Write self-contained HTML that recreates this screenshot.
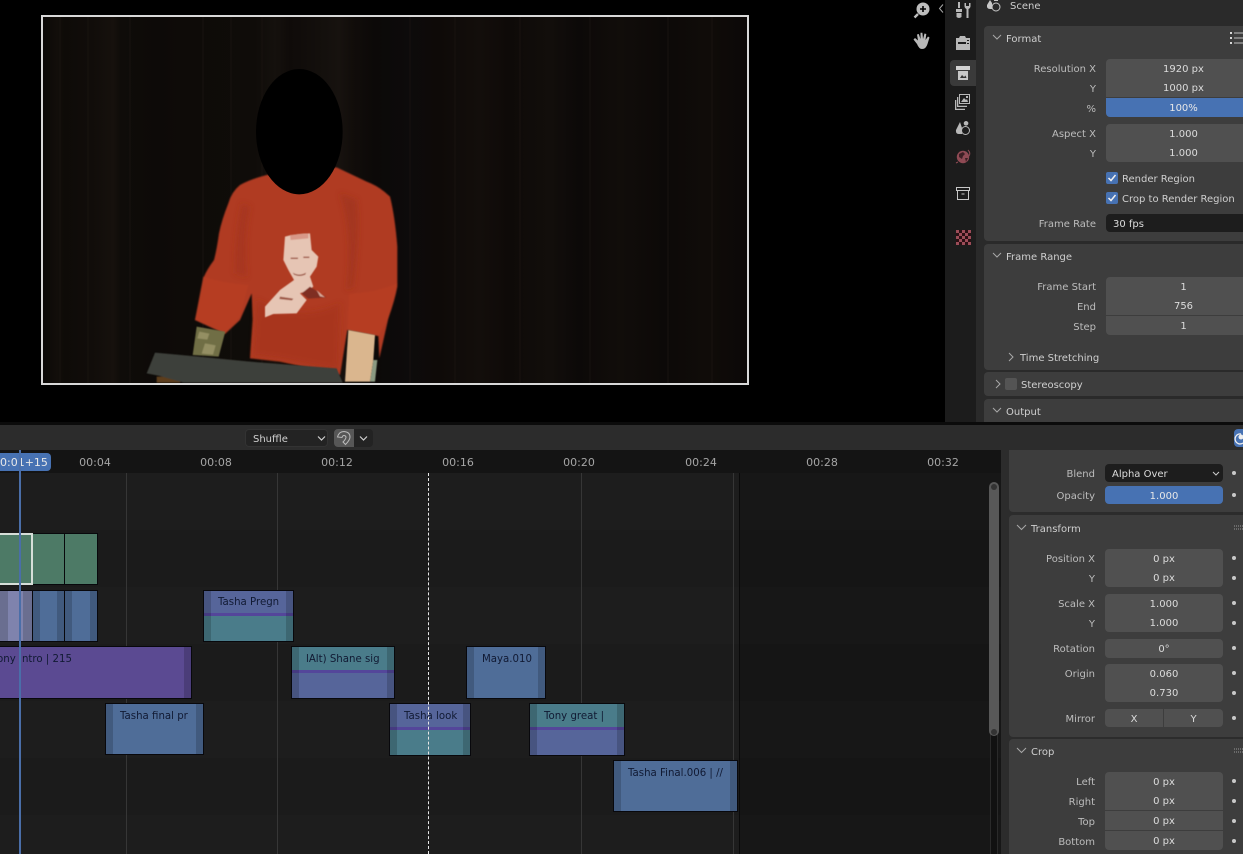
<!DOCTYPE html>
<html><head><meta charset="utf-8">
<style>
html,body{margin:0;padding:0;background:#000}
#r{position:relative;width:1243px;height:854px;overflow:hidden;background:#000;font-family:"DejaVu Sans","Liberation Sans",sans-serif;font-size:10px;color:#c6c6c6}
#r div{position:absolute;box-sizing:border-box;white-space:nowrap}
.p{background:#3d3d3d;border-radius:4px}
.l{left:976px;width:120px;text-align:right;height:18px;line-height:22px;color:#bdbdbd}
.m{left:1001px;width:94px;text-align:right;height:18px;line-height:22px;color:#bdbdbd}
.f{left:1106px;width:155px;height:19px;line-height:22px;text-align:center;background:#505050;color:#dcdcdc}
.g{left:1105px;width:118px;height:19px;line-height:22px;text-align:center;background:#505050;color:#dcdcdc}
.b{background:#4772b3!important;color:#e8e8e8}
.h{color:#cfcfcf;height:18px;line-height:22px}
.d{left:1232px;width:4px;height:4px;border-radius:50%;background:#c8c8c8}
.t{top:450px;height:23px;line-height:25px;color:#a5a5a5;font-size:11px;width:50px;text-align:center}
.s{border:1px solid #08080c}
.n{color:#111a33;height:16px;line-height:20px;font-size:10.2px}
.e{width:7px;top:0;bottom:0;background:rgba(0,0,0,.17)}
.e.a{left:0}.e.z{right:0}
.line{width:1px;top:473px;bottom:0;background:#363636}
svg{position:absolute;overflow:visible}
</style></head><body><div id="r">

<!-- video -->
<svg style="left:0;top:0" width="945" height="422" viewBox="0 0 945 422">
<defs>
<linearGradient id="c" x1="0" x2="1" y1="0" y2="0">
<stop offset="0" stop-color="#0b0907"/><stop offset=".02" stop-color="#120e0a"/><stop offset=".03" stop-color="#0e0b08"/><stop offset=".07" stop-color="#110d0a"/><stop offset=".1" stop-color="#16110d"/><stop offset=".11" stop-color="#0f0c09"/><stop offset=".16" stop-color="#0d0a08"/><stop offset=".2" stop-color="#0e0b08"/><stop offset=".3" stop-color="#0f0c09"/><stop offset=".33" stop-color="#15110d"/><stop offset=".35" stop-color="#0f0b09"/><stop offset=".4" stop-color="#14100d"/><stop offset=".42" stop-color="#17120f"/><stop offset=".44" stop-color="#110d0a"/><stop offset=".47" stop-color="#0c0908"/><stop offset=".52" stop-color="#0d0b0b"/><stop offset=".56" stop-color="#0e0a08"/><stop offset=".62" stop-color="#130e0b"/><stop offset=".66" stop-color="#0e0a08"/><stop offset=".72" stop-color="#120e0b"/><stop offset=".76" stop-color="#0c0908"/><stop offset=".82" stop-color="#110d0a"/><stop offset=".88" stop-color="#0c0908"/><stop offset=".94" stop-color="#100c09"/><stop offset="1" stop-color="#0b0807"/>
</linearGradient>
<filter id="bl" x="-5%" y="-5%" width="110%" height="110%"><feGaussianBlur stdDeviation="2.4"/></filter>
<filter id="bf" x="-10%" y="-10%" width="120%" height="120%"><feGaussianBlur stdDeviation="8"/></filter>
<filter id="bs" x="-5%" y="-5%" width="110%" height="110%"><feGaussianBlur stdDeviation="1.2"/></filter>
<pattern id="ck" width="6" height="6" patternUnits="userSpaceOnUse"><rect x="3" width="3" height="3" fill="#2a1014"/><rect y="3" width="3" height="3" fill="#2a1014"/></pattern>
</defs>
<rect x="43" y="17" width="705" height="367" fill="url(#c)"/>
<path d="M60 17v367M88 17v367M130 17v367M203 17v367M231 17v367M262 17v367M410 17v367M455 17v367M520 17v367M590 17v367M668 17v367M712 17v367" stroke="#1c1612" stroke-width="1" opacity=".7"/>
<g transform="translate(140 60) scale(.33333)">
<g filter="url(#bl)">
<path d="M380 345 Q330 358 300 375 Q275 395 265 430 Q245 480 237 520 Q230 570 222 600 Q200 630 192 650 Q182 690 178 720 L165 780 L255 822 L300 780 L335 700 L338 780 L330 895 L420 905 L600 945 L622 810 L715 828 L718 895 L745 775 Q765 720 772 680 L772 560 Q765 470 750 410 Q720 380 680 365 L590 322Z" fill="#b03a22"/>
<path d="M190 650 Q250 670 325 675 L300 770 L255 820 L165 780Z" fill="#b63d23"/>
<path d="M628 700 Q700 700 772 670 L745 775 L715 828 L622 810Z" fill="#b63d23"/>
</g>
<g filter="url(#bf)">
<path d="M305 430 Q285 520 285 640 L320 650 Q310 530 330 440Z" fill="#a2331d" opacity=".6"/>
<path d="M600 400 Q640 520 620 690 L640 680 Q660 520 650 420Z" fill="#9c301b" opacity=".6"/>
<path d="M350 720 Q480 790 600 730 L595 930 L420 895 L340 885Z" fill="#a5341e" opacity=".7"/>
</g>
<g filter="url(#bs)">
<path d="M170 800 L256 815 L236 890 L158 885Z" fill="#6f6e45"/>
<path d="M178 815l30 6-6 18-30-4zM195 850l32 6-8 28-34-3z" fill="#948f64"/>
<path d="M625 810 L705 825 L700 900 L690 965 L615 965Z" fill="#dab68e"/>
<path d="M700 900 L712 900 L705 965 L690 965Z" fill="#8b9a82"/>
<path d="M435 530 Q470 520 510 520 L515 570 L535 590 L530 620 L510 650 L520 680 L505 690 L480 700 L500 720 L470 760 L400 762 L375 772 L375 740 L420 690 L462 660 L445 630 L430 600Z" fill="#e6c5b4"/>
<path d="M510 680 L558 712 L505 716 L485 700Z" fill="#7f2f24"/>
<path d="M530 690l25 22-15-3z" fill="#d8a898"/>
<path d="M452 593h22v4h-22zM490 590h18v4h-18zM458 638q20 12 40 0l-2 6q-18 8-34 0zM420 710l40 6-4 5-38-4z" fill="#9c5442"/>
<path d="M450 525 L505 521 L505 535 L452 540Z" fill="#d89888"/>
<path d="M50 950 L130 950 L120 968 L50 968Z" fill="#5c3c1e"/>
<path d="M45 878 Q180 890 330 905 L590 925 L608 968 L130 968 L60 948 L20 940Z" fill="#3d3f3a"/>
</g>
<ellipse cx="478" cy="215" rx="130" ry="188" fill="#000"/>
</g>
<rect x="42" y="16" width="706" height="368" fill="none" stroke="#d8d8d8" stroke-width="2"/>
</svg>

<!-- viewport icons -->
<svg style="left:912px;top:0" width="32" height="50" viewBox="0 0 32 50">
<circle cx="11" cy="9" r="6.500" fill="#bdbdbd"/><path d="M11 6v6M8 9h6" stroke="#000" stroke-width="1.600"/><path d="M6 14l-3.500 3.500" stroke="#bdbdbd" stroke-width="2.400"/>
<path d="M5 44 L1.500 39.500 L3 38 L6 40.500 L5 34.500 L6.800 34 L8.500 39 L8.500 32.800 L10.400 32.800 L11 39 L12.500 33.500 L14.300 34 L13.500 40 L16 36.500 L17.500 37.500 L15.500 44 Q14 49 10 49 Q7 49 5 44Z" fill="#b8b8b8"/>
<path d="M31 4.500l-3.500 4 3.500 4" fill="none" stroke="#a8a8a8" stroke-width="1"/>
</svg>

<!-- properties editor top -->
<div style="left:945px;top:0;width:31px;height:422px;background:#1c1c1c"></div>
<div style="left:976px;top:0;width:267px;height:422px;background:#2a2a2a"></div>
<div style="left:950px;top:60px;width:26px;height:26px;background:#3a3a3a;border-radius:4px 0 0 4px"></div>

<svg style="left:950px;top:0" width="26" height="250" viewBox="0 0 26 250">
<g fill="#b8b8b8">
<path d="M8 2h2v6H8zM6 9h6v3H6zM6.500 13h5v4q-2.500 2-5 0z"/>
<path d="M14.500 3v3q0 2 2 3v9h2V9q2-1 2-3V3l-1.500 0v3h-3V3z"/>
<path d="M6 38h3l1-2h5l1 2h4v12H6z M8 42v2h8v-2z M17 40h2v1h-2z M17 43h2v1h-2z" fill-rule="evenodd"/>
<path d="M6 66h14v4H6z" fill="#d4d4d4"/><path d="M8 71h10v9H8z" fill="#c8c8c8"/><path d="M10 78l2-3 2 2 1.500-1.500 1 2.500z" fill="#333"/>
<path d="M9 94h11v10H9z M10 95v8h9v-8z" fill-rule="evenodd"/><path d="M11 102l3-4 2 2 1-1 1 3z M16 96h2v2h-2z"/>
<path d="M7 97v10h10v-1.300H8.300V97z M5 100v10h10v-1.300H6.300V100z"/>
<path d="M10 122l-4 8q-.5 4 3 4h3v-6z M16 121a2.300 2.300 0 1 0 .1 0z"/>
</g>
<circle cx="15.500" cy="130.500" r="4" fill="#1c1c1c" stroke="#b8b8b8" stroke-width="1"/>
<circle cx="13" cy="157" r="6.200" fill="#8f4a54"/><path d="M9 154l4-2 2 2-2 2-1 3-3-2z M15 158l3 0-2 4z" fill="#3c1f24"/><path d="M6 163l2-1 M18 150q3 3 1 6" stroke="#8f4a54" fill="none"/>
<path d="M6.500 187.500h13v3h-13z M7.500 190.500h11v9h-11z M11.500 194h3" fill="none" stroke="#c8c8c8" stroke-width="1"/>
<rect x="6" y="230" width="15" height="15" fill="#9c4c58"/>
<g transform="translate(6 230)"><rect width="15" height="15" fill="url(#ck)"/></g>
</svg>

<svg style="left:986px;top:0" width="18" height="14" viewBox="0 0 18 14">
<path d="M4 0l-3 5q-.5 4 3 4h2V3z M8 0h4v1H8z" fill="#c8c8c8"/><circle cx="10" cy="7" r="4" fill="#2a2a2a" stroke="#c8c8c8"/>
</svg>
<div class="h" style="left:1010px;top:-4px">Scene</div>

<div class="p" style="left:984px;top:26px;width:270px;height:215px"></div>
<svg style="left:992px;top:33px" width="12" height="10"><path d="M1 2l4 4 4-4" fill="none" stroke="#a8a8a8"/></svg>
<div class="h" style="left:1006px;top:29px">Format</div>
<svg style="left:1228px;top:31px" width="15" height="14"><path d="M2 1h2v2H2zM2 6h2v2H2zM2 11h2v2H2z" fill="#d8d8d8"/><path d="M6 2h9M6 7h9M6 12h9" stroke="#c0c0c0"/></svg>

<div class="l" style="top:59px">Resolution X</div><div class="f" style="top:59px;border-radius:4px 0 0 0">1920 px</div>
<div class="l" style="top:79px">Y</div><div class="f" style="top:78px">1000 px</div>
<div class="l" style="top:99px">%</div><div class="f b" style="top:98px;border-radius:0 0 0 4px">100%</div>
<div class="l" style="top:124px">Aspect X</div><div class="f" style="top:124px;border-radius:4px 0 0 0">1.000</div>
<div class="l" style="top:144px">Y</div><div class="f" style="top:143px;border-radius:0 0 0 4px">1.000</div>

<svg style="left:1106px;top:172px" width="12" height="32"><rect width="12" height="12" rx="2" fill="#4772b3"/><rect y="20" width="12" height="12" rx="2" fill="#4772b3"/><path d="M2.500 6l2.500 2.500 4.500-5.500M2.500 26l2.500 2.500 4.500-5.500" fill="none" stroke="#f0f0f0" stroke-width="1.500"/></svg>
<div class="h" style="left:1122px;top:169px">Render Region</div>
<div class="h" style="left:1122px;top:189px">Crop to Render Region</div>

<div class="l" style="top:214px">Frame Rate</div>
<div class="f" style="top:214px;background:#1d1d1d;text-align:left;padding-left:7px;border-radius:4px 0 0 4px;height:18px">30 fps</div>

<div class="p" style="left:984px;top:244px;width:270px;height:126px"></div>
<svg style="left:992px;top:251px" width="12" height="10"><path d="M1 2l4 4 4-4" fill="none" stroke="#a8a8a8"/></svg>
<div class="h" style="left:1006px;top:247px">Frame Range</div>
<div class="l" style="top:277px">Frame Start</div><div class="f" style="top:277px;border-radius:4px 0 0 0">1</div>
<div class="l" style="top:297px">End</div><div class="f" style="top:296px">756</div>
<div class="l" style="top:317px">Step</div><div class="f" style="top:316px;border-radius:0 0 0 4px">1</div>
<svg style="left:1008px;top:352px" width="10" height="12"><path d="M1 1l4 4-4 4" fill="none" stroke="#a8a8a8"/></svg>
<div class="h" style="left:1020px;top:348px">Time Stretching</div>

<div class="p" style="left:984px;top:372px;width:270px;height:24px"></div>
<svg style="left:995px;top:379px" width="10" height="12"><path d="M1 1l4 4-4 4" fill="none" stroke="#a8a8a8"/></svg>
<div style="left:1005px;top:378px;width:12px;height:12px;background:#545454;border-radius:2px"></div>
<div class="h" style="left:1021px;top:375px">Stereoscopy</div>

<div class="p" style="left:984px;top:399px;width:270px;height:30px"></div>
<svg style="left:992px;top:406px" width="12" height="10"><path d="M1 2l4 4 4-4" fill="none" stroke="#a8a8a8"/></svg>
<div class="h" style="left:1006px;top:402px">Output</div>

<!-- divider + header -->
<div style="left:0;top:422px;width:1243px;height:3px;background:#0b0b0b"></div>
<div style="left:0;top:425px;width:1243px;height:25px;background:#2c2c2c"></div>
<div style="left:245px;top:429px;width:83px;height:18px;background:#232323;border-radius:4px;border:1px solid #333;line-height:20px;padding-left:7px;color:#d0d0d0">Shuffle</div>
<svg style="left:317px;top:435px" width="10" height="8"><path d="M1 1.500l3.500 3.500 3.500-3.500" fill="none" stroke="#d0d0d0" stroke-width="1.200"/></svg>
<div style="left:334px;top:429px;width:20px;height:18px;background:#575757;border-radius:4px 0 0 4px"></div>
<svg style="left:336px;top:430px" width="16" height="16" viewBox="0 0 16 16"><path d="M1.500 7 Q3 1.500 8 1.500 Q14 2 14 7 Q14 10 9.500 14.500 L7 12 Q10 9 10 7 Q9.500 5.500 8 5.500 Q6.500 5.500 6 7.500Z" fill="none" stroke="#bcbcbc" stroke-width="1"/></svg>
<div style="left:354px;top:429px;width:19px;height:18px;background:#232323;border-radius:0 4px 4px 0"></div>
<svg style="left:359px;top:435px" width="10" height="8"><path d="M1 1.500l3.500 3.500 3.500-3.500" fill="none" stroke="#d0d0d0" stroke-width="1.200"/></svg>
<div style="left:1234px;top:429px;width:12px;height:18px;background:#4772b3;border-radius:4px 0 0 4px"></div>
<svg style="left:1235px;top:431px" width="8" height="14"><path d="M6 3a5 5 0 1 0 2 9" fill="none" stroke="#eee" stroke-width="1.300"/><circle cx="6" cy="6" r="2.500" fill="#eee"/></svg>

<!-- timeline -->
<div style="left:0;top:450px;width:1001px;height:23px;background:#141414"></div>
<div style="left:0;top:473px;width:1001px;height:381px;background:#1d1d1d"></div>
<div style="left:0;top:530px;width:1001px;height:57px;background:#1b1b1b"></div>
<div style="left:0;top:587px;width:1001px;height:57px;background:#1d1d1d"></div>
<div style="left:0;top:644px;width:1001px;height:57px;background:#1b1b1b"></div>
<div style="left:0;top:701px;width:1001px;height:57px;background:#1d1d1d"></div>
<div style="left:0;top:758px;width:1001px;height:57px;background:#1b1b1b"></div>
<div style="left:739px;top:473px;width:262px;height:381px;background:rgba(0,0,0,.2)"></div>
<div style="left:739px;top:473px;width:1px;height:381px;background:#0a0a0a"></div>
<div class="line" style="left:126px"></div>
<div class="line" style="left:277px"></div>
<div class="line" style="left:581px"></div>
<div class="line" style="left:733px"></div>

<div class="t" style="left:70px">00:04</div>
<div class="t" style="left:191px">00:08</div>
<div class="t" style="left:312px">00:12</div>
<div class="t" style="left:433px">00:16</div>
<div class="t" style="left:554px">00:20</div>
<div class="t" style="left:676px">00:24</div>
<div class="t" style="left:797px">00:28</div>
<div class="t" style="left:918px">00:32</div>

<!-- strips -->
<div class="s" style="left:32px;top:533px;width:33px;height:52px;background:#4d7a66"></div>
<div class="s" style="left:64px;top:533px;width:34px;height:52px;background:#4d7a66"></div>
<div class="s" style="left:-4px;top:533px;width:37px;height:52px;background:#4d7a66;border:2px solid #d6ded8"></div>

<div class="s" style="left:-4px;top:590px;width:37px;height:52px;background:linear-gradient(90deg,#6a6e90 0,#6a6e90 11px,#7f83ad 11px,#7f83ad 26px,#6a6e90 26px)"></div>
<div class="s" style="left:32px;top:590px;width:33px;height:52px;background:#4f6d98"><div class="e a"></div><div class="e z"></div></div>
<div class="s" style="left:64px;top:590px;width:34px;height:52px;background:#4f6d98"><div class="e a"></div><div class="e z"></div></div>

<div class="s" style="left:-4px;top:646px;width:196px;height:53px;background:#5b4a92"><div class="e z"></div><div class="n" style="left:0;top:3px">ony Intro | 215</div></div>

<div class="s" style="left:203px;top:590px;width:91px;height:52px;background:linear-gradient(#56659a 0,#56659a 22px,#54469a 22px,#54469a 25px,#4a7c8a 25px)"><div class="e a"></div><div class="e z"></div><div class="n" style="left:14px;top:2px">Tasha Pregn</div></div>

<div class="s" style="left:291px;top:646px;width:104px;height:53px;background:linear-gradient(#4a7c8a 0,#4a7c8a 23px,#54469a 23px,#54469a 26px,#56659a 26px)"><div class="e a"></div><div class="e z"></div><div class="n" style="left:14px;top:3px">lAlt) Shane sig</div></div>

<div class="s" style="left:466px;top:646px;width:80px;height:53px;background:#4f6d98"><div class="e a"></div><div class="e z"></div><div class="n" style="left:15px;top:3px">Maya.010</div></div>

<div class="s" style="left:105px;top:703px;width:99px;height:52px;background:#4f6d98"><div class="e a"></div><div class="e z"></div><div class="n" style="left:14px;top:3px">Tasha final pr</div></div>

<div class="s" style="left:389px;top:703px;width:82px;height:53px;background:linear-gradient(#56659a 0,#56659a 23px,#54469a 23px,#54469a 26px,#4a7c8a 26px)"><div class="e a"></div><div class="e z"></div><div class="n" style="left:14px;top:3px">Tasha look</div></div>

<div class="s" style="left:529px;top:703px;width:96px;height:53px;background:linear-gradient(#4a7c8a 0,#4a7c8a 23px,#54469a 23px,#54469a 26px,#56659a 26px)"><div class="e a"></div><div class="e z"></div><div class="n" style="left:14px;top:3px">Tony great |</div></div>

<div class="s" style="left:613px;top:760px;width:125px;height:52px;background:#4f6d98"><div class="e a"></div><div class="e z"></div><div class="n" style="left:14px;top:3px">Tasha Final.006 | //</div></div>

<!-- dashed + playhead -->
<div style="left:428px;top:473px;height:381px;width:0;border-left:1px dashed #e8e8e8"></div>
<div style="left:0;top:453px;width:51px;height:18px;background:#4772b3;border-radius:0 4px 4px 0;line-height:19px;color:#e8e8e8;font-size:11px;text-align:right;padding-right:4px">0:01+15</div>
<div style="left:19px;top:450px;width:2px;height:404px;background:#4a6ea8"></div>

<!-- scrollbar -->
<div style="left:990px;top:733px;width:8px;height:121px;background:#111;border-left:1px solid #2a2a2a;border-right:1px solid #2a2a2a"></div>
<div style="left:989px;top:482px;width:10px;height:254px;background:#585858;border-radius:5px"></div>
<svg style="left:989px;top:482px" width="10" height="256"><circle cx="5" cy="5" r="3" fill="#333"/><circle cx="5" cy="250" r="3" fill="#333"/></svg>

<!-- sidebar -->
<div style="left:1001px;top:450px;width:242px;height:404px;background:#2c2c2c"></div>
<div class="p" style="left:1009px;top:450px;width:250px;height:62px;border-radius:0 0 0 4px"></div>
<div class="m" style="top:464px">Blend</div>
<div class="g" style="top:464px;background:#1d1d1d;text-align:left;padding-left:7px;border-radius:4px;height:18px">Alpha Over</div>
<svg style="left:1212px;top:471px" width="9" height="7"><path d="M1 1l3 3 3-3" fill="none" stroke="#ccc"/></svg>
<div class="d" style="top:471px"></div>
<div class="m" style="top:486px">Opacity</div><div class="g b" style="top:486px;border-radius:4px;height:18px">1.000</div><div class="d" style="top:493px"></div>

<div class="p" style="left:1009px;top:515px;width:250px;height:222px"></div>
<svg style="left:1016px;top:524px" width="12" height="10"><path d="M1 1l4.500 4.500 4.500-4.500" fill="none" stroke="#a8a8a8"/></svg>
<div class="h" style="left:1031px;top:519px">Transform</div>
<svg style="left:1234px;top:525px" width="9" height="6"><path d="M0 1h9M0 4h9" stroke="#999" stroke-dasharray="1 1"/></svg>

<div class="m" style="top:549px">Position X</div><div class="g" style="top:549px;border-radius:4px 4px 0 0">0 px</div><div class="d" style="top:556px"></div>
<div class="m" style="top:569px">Y</div><div class="g" style="top:568px;border-radius:0 0 4px 4px">0 px</div><div class="d" style="top:576px"></div>
<div class="m" style="top:594px">Scale X</div><div class="g" style="top:594px;border-radius:4px 4px 0 0">1.000</div><div class="d" style="top:601px"></div>
<div class="m" style="top:614px">Y</div><div class="g" style="top:613px;border-radius:0 0 4px 4px">1.000</div><div class="d" style="top:621px"></div>
<div class="m" style="top:639px">Rotation</div><div class="g" style="top:639px;border-radius:4px">0°</div><div class="d" style="top:646px"></div>
<div class="m" style="top:664px">Origin</div><div class="g" style="top:664px;border-radius:4px 4px 0 0">0.060</div><div class="d" style="top:671px"></div>
<div class="g" style="top:683px;border-radius:0 0 4px 4px">0.730</div><div class="d" style="top:691px"></div>
<div class="m" style="top:709px">Mirror</div>
<div class="g" style="top:709px;width:58px;border-radius:4px 0 0 4px;height:18px">X</div>
<div class="g" style="top:709px;left:1164px;width:59px;border-radius:0 4px 4px 0;height:18px">Y</div><div class="d" style="top:716px"></div>

<div class="p" style="left:1009px;top:739px;width:250px;height:130px"></div>
<svg style="left:1016px;top:747px" width="12" height="10"><path d="M1 1l4.500 4.500 4.500-4.500" fill="none" stroke="#a8a8a8"/></svg>
<div class="h" style="left:1031px;top:742px">Crop</div>
<svg style="left:1234px;top:748px" width="9" height="6"><path d="M0 1h9M0 4h9" stroke="#999" stroke-dasharray="1 1"/></svg>
<div class="m" style="top:772px">Left</div><div class="g" style="top:772px;border-radius:4px 4px 0 0">0 px</div><div class="d" style="top:779px"></div>
<div class="m" style="top:792px">Right</div><div class="g" style="top:791px">0 px</div><div class="d" style="top:799px"></div>
<div class="m" style="top:812px">Top</div><div class="g" style="top:811px">0 px</div><div class="d" style="top:819px"></div>
<div class="m" style="top:832px">Bottom</div><div class="g" style="top:831px;border-radius:0 0 4px 4px">0 px</div><div class="d" style="top:839px"></div>

</div></body></html>
